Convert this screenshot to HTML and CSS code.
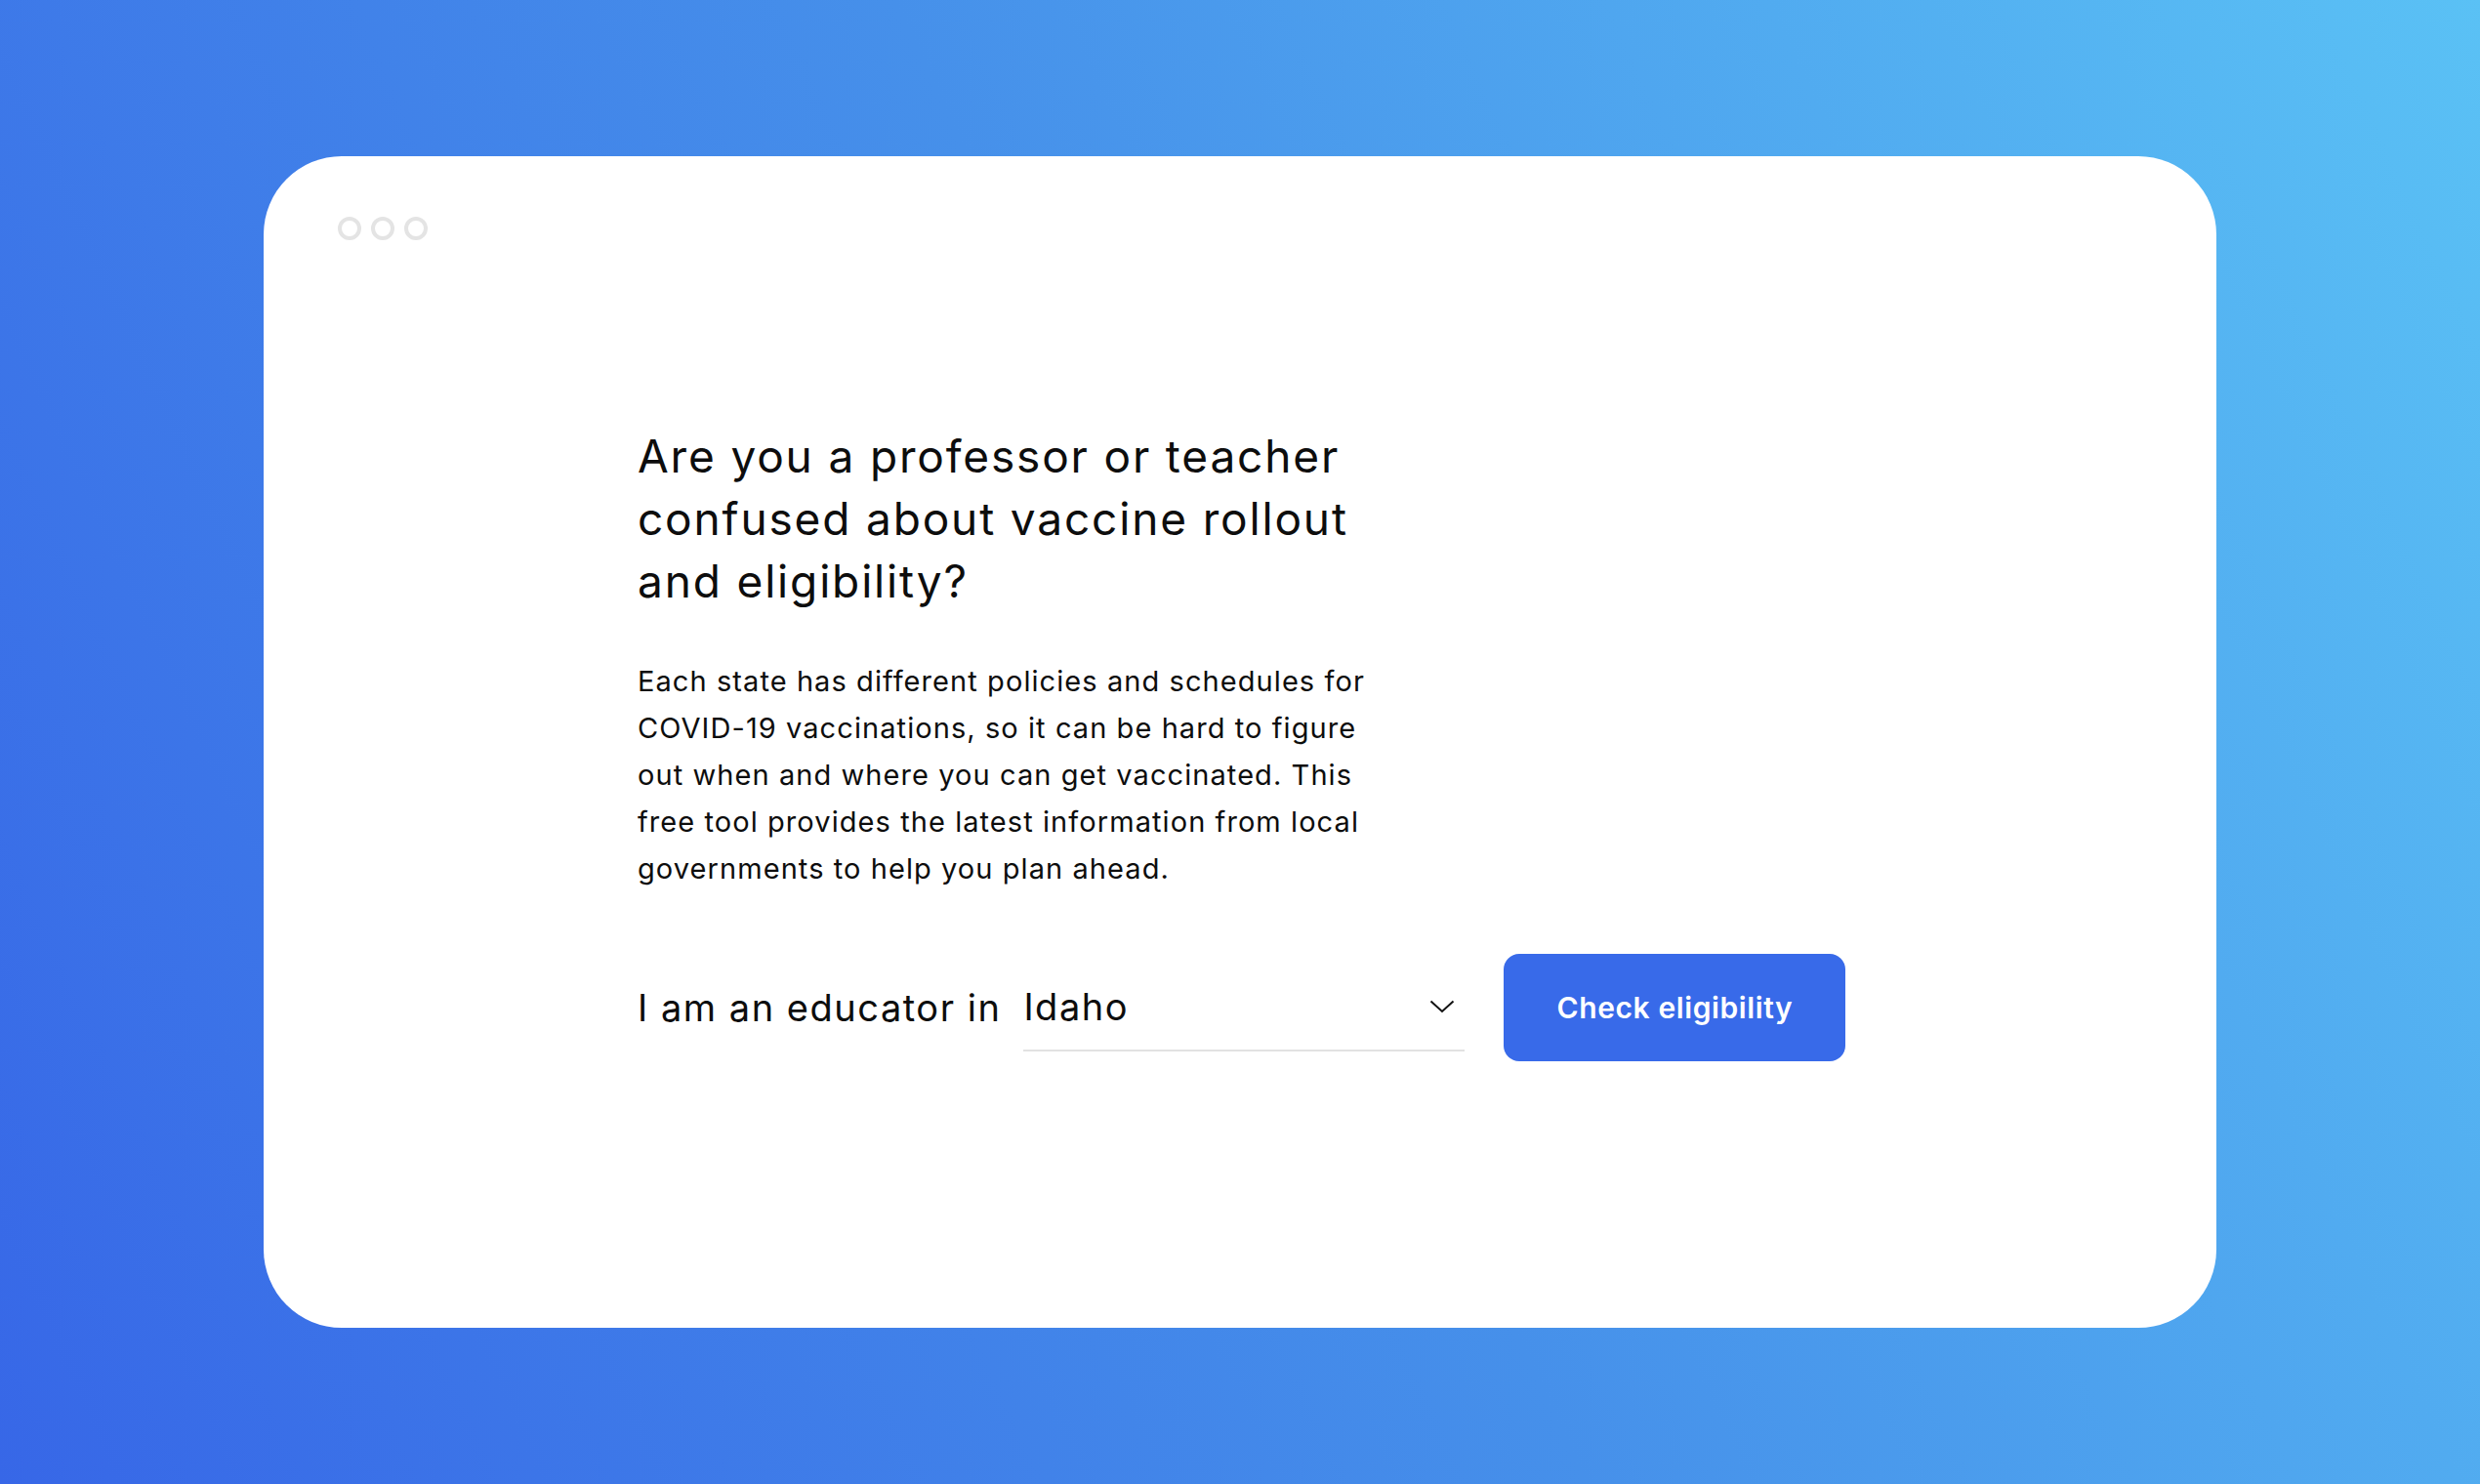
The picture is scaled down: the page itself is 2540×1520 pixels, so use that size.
FILE: index.html
```html
<!DOCTYPE html>
<html lang="en">
  <head>
    <meta charset="UTF-8" />
    <meta name="viewport" content="width=device-width, initial-scale=1.0" />
    <title>Educator Vaccine Eligibility</title>
    <link rel="stylesheet" href="styles.css">
  </head>
  <body>
    <div class="window">
      <div class="window-bar">
        <span class="dot"></span>
        <span class="dot"></span>
        <span class="dot"></span>
      </div>

      <div class="intro">
        <h1>Are you a professor or teacher confused about vaccine rollout and eligibility?</h1>
        <p>
          Each state has different policies and schedules for COVID-19
          vaccinations, so it can be hard to figure out when and where you can
          get vaccinated. This free tool provides the latest information from
          local governments to help you plan ahead.
        </p>

        <form class="check-form" onsubmit="return false">
          <label for="state">I am an educator in</label>
          <div class="select-wrap">
            <select id="state">
              <option>Alabama</option>
              <option>Alaska</option>
              <option>Arizona</option>
              <option>California</option>
              <option>Colorado</option>
              <option>Florida</option>
              <option>Georgia</option>
              <option selected>Idaho</option>
              <option>Illinois</option>
              <option>New York</option>
              <option>Texas</option>
              <option>Washington</option>
            </select>
            <svg class="chevron" width="26" height="14" viewBox="0 0 26 14">
              <path d="M1.5 1.5 L13 12 L24.5 1.5" fill="none" stroke="#111" stroke-width="2" />
            </svg>
          </div>
          <button type="submit" class="check-btn">Check eligibility</button>
        </form>
      </div>
    </div>
  </body>
</html>
```

FILE: styles.css
```css
body {
  font-family: Inter, "Noto Sans", sans-serif;
  margin: 0;
  min-height: 100vh;
  display: flex;
  justify-content: center;
  align-items: center;
  background: linear-gradient(65deg, #3767e7 0%, #4690ea 50%, #5ac1f5 100%);
  color: #0d0d0d;
}
.window {
  width: 2000px;
  height: 1200px;
  box-sizing: border-box;
  background: white;
  border-radius: 80px;
  padding: 62px 76px;
}
.window-bar {
  display: flex;
  gap: 10px;
}
.dot {
  width: 24px;
  height: 24px;
  box-sizing: border-box;
  border: 4px solid #e4e4e4;
  border-radius: 50%;
}
.intro {
  margin: 189px 0 0 307px;
}
h1 {
  margin: 0;
  max-width: 770px;
  font-size: 46px;
  font-weight: 400;
  line-height: 64px;
  letter-spacing: 0.04em;
}
p {
  margin: 47px 0 0;
  max-width: 770px;
  font-size: 29px;
  line-height: 48px;
  letter-spacing: 0.037em;
}
.check-form {
  display: flex;
  align-items: center;
  margin-top: 63px;
}
.check-form label {
  font-size: 38px;
  letter-spacing: 0.04em;
  margin-right: 23px;
}
.select-wrap {
  position: relative;
  width: 452px;
  margin-right: 40px;
}
.select-wrap select {
  appearance: none;
  display: block;
  width: 100%;
  border: none;
  border-bottom: 2px solid #e2e2e2;
  border-radius: 0;
  background: white;
  font-family: inherit;
  font-size: 38px;
  line-height: 46px;
  letter-spacing: 0.04em;
  color: #0d0d0d;
  padding: 21px 0;
  outline: none;
}
.chevron {
  position: absolute;
  right: 10px;
  top: calc(50% - 8px);
  pointer-events: none;
}
.check-btn {
  width: 350px;
  height: 110px;
  border: none;
  border-radius: 16px;
  background: #386ae9;
  color: white;
  font-family: inherit;
  font-size: 30px;
  font-weight: 600;
  letter-spacing: 0.02em;
  cursor: pointer;
}
```
